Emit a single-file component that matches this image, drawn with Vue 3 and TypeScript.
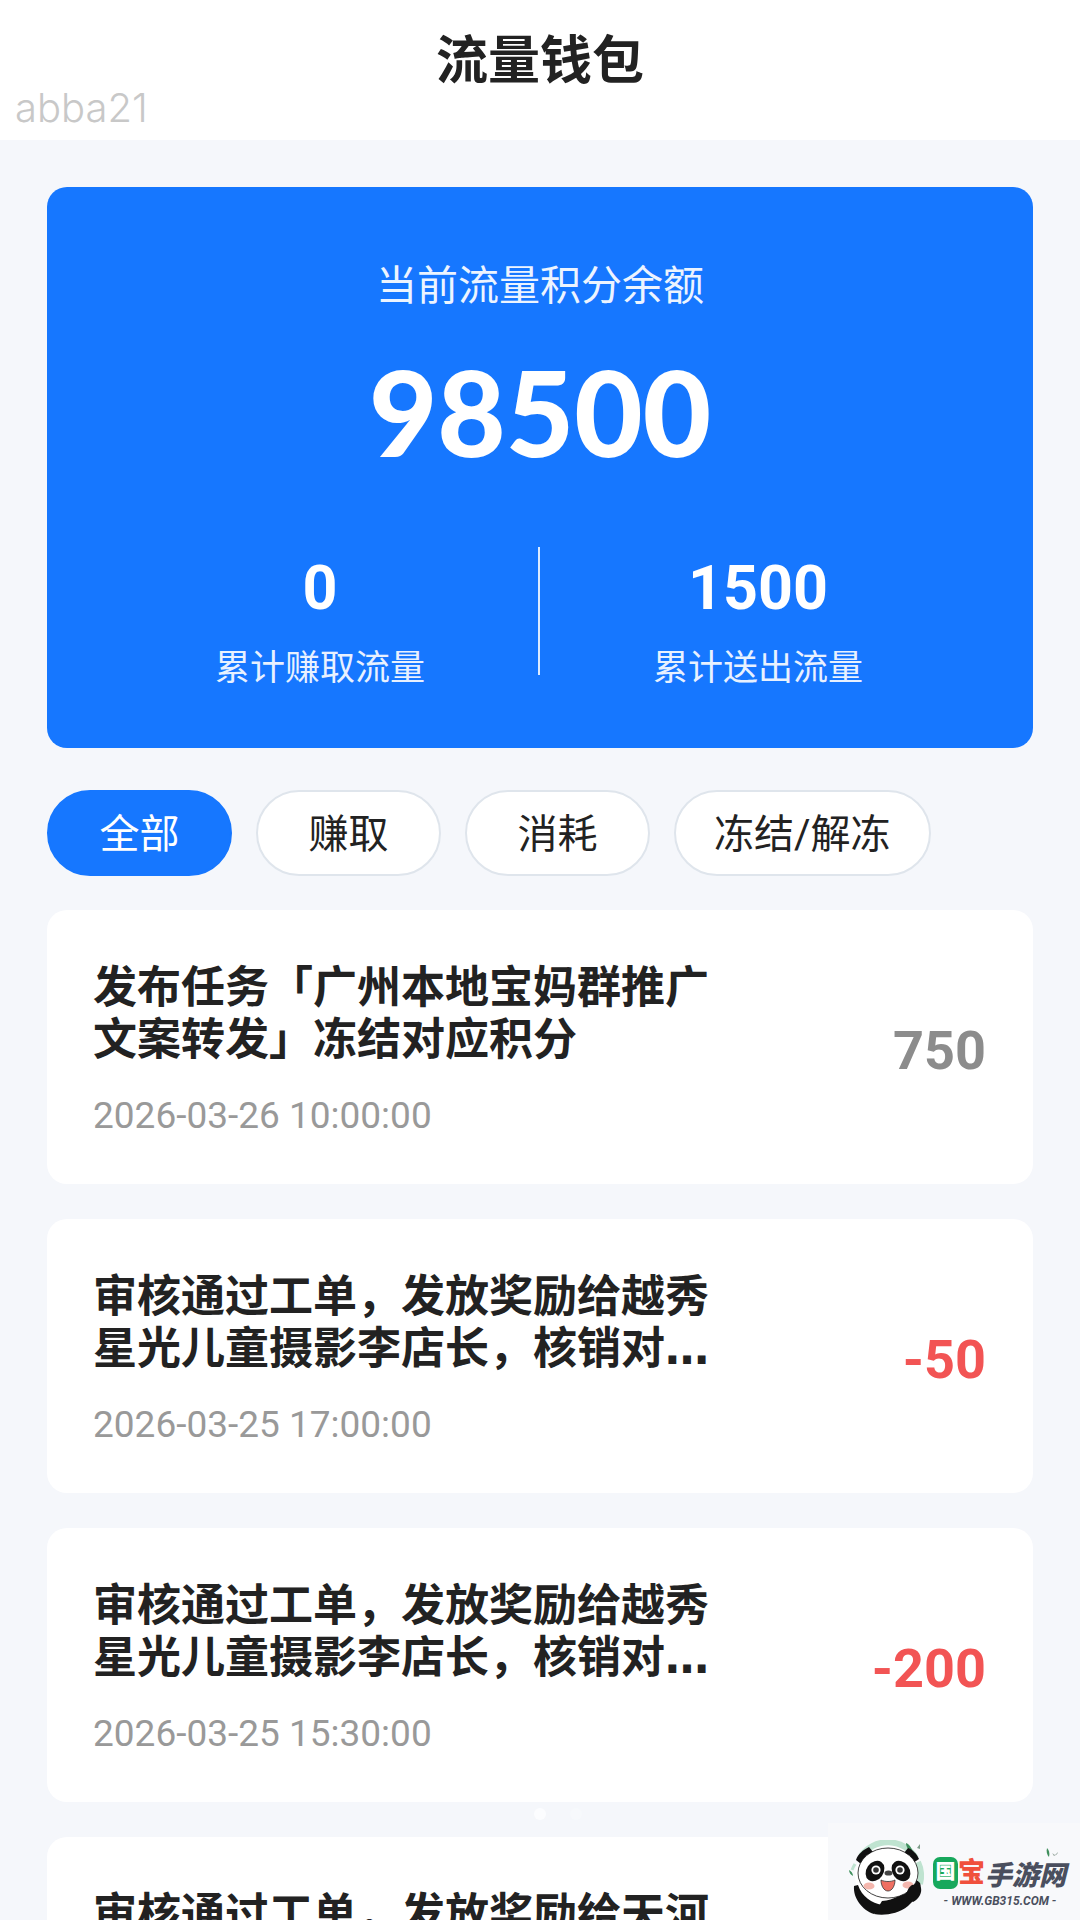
<template>
  <div class="page">
    <header class="top-bar">
      <h1 class="title">流量钱包</h1>
    </header>
    <span class="user-mark">abba21</span>

    <main class="content">
      <section class="balance-card">
        <div class="balance-label">当前流量积分余额</div>
        <div class="balance-value">98500</div>
        <div class="stats">
          <div class="stat">
            <div class="stat-value">0</div>
            <div class="stat-label">累计赚取流量</div>
          </div>
          <div class="stat-divider"></div>
          <div class="stat">
            <div class="stat-value">1500</div>
            <div class="stat-label">累计送出流量</div>
          </div>
        </div>
      </section>

      <nav class="tabs">
        <button
          v-for="(tab, i) in tabs"
          :key="tab"
          class="tab"
          :class="{ active: i === 0 }"
        >
          {{ tab }}
        </button>
      </nav>

      <ul class="records">
        <li v-for="item in records" :key="item.time" class="record">
          <div class="record-main">
            <div class="record-title">{{ item.title }}</div>
            <div class="record-time">{{ item.time }}</div>
          </div>
          <div class="record-amount" :class="item.kind">{{ item.amount }}</div>
        </li>
      </ul>
    </main>

    <div class="scroll-dots"><i class="on"></i><i></i></div>

    <div class="site-mark">
      <svg class="panda" viewBox="0 0 80 76" xmlns="http://www.w3.org/2000/svg">
        <circle cx="40" cy="36" r="33" fill="#fff" />
        <path d="M13 16A33 33 0 0 1 68 18" fill="none" stroke="#bfe3d0" stroke-width="6" />
        <path d="M70 22A33 33 0 0 1 72 44" fill="none" stroke="#bfe3d0" stroke-width="6" />
        <path d="M4 30A36 36 0 0 1 7 24" fill="none" stroke="#bfe3d0" stroke-width="3" />
        <path d="M58 3c3 1 6 5 7 10-4-2-7-6-7-10z" fill="#3f8f5c" />
        <path d="M69 8l3-4 0 5z" fill="#7d9c88" />
        <path d="M1 30c2 1 4 3 4 6-2-1-4-3-4-6z" fill="#3f8f5c" />
        <path d="M8 20c2-6 7-10 13-13l4 5c-6 2-10 7-12 12z" fill="#111" />
        <path d="M60 8c5 2 9 6 11 11l-6 4c-2-4-5-8-9-10z" fill="#111" />
        <path d="M6 46c-1 12 8 24 20 28l8-9c-10-2-20-8-24-20z" fill="#111" />
        <path d="M26 74c10 2 24 0 34-8l8-8c4-4 6-10 4-15-2-3-6-4-9-3l-3 8c-4 6-14 12-26 13z" fill="#111" />
        <ellipse cx="40" cy="33" rx="30" ry="25" fill="#fff" stroke="#111" stroke-width="0.8" />
        <ellipse cx="27" cy="31" rx="8.5" ry="11" fill="#111" transform="rotate(35 27 31)" />
        <ellipse cx="53" cy="31" rx="8.5" ry="11" fill="#111" transform="rotate(-35 53 31)" />
        <circle cx="28" cy="30" r="4.6" fill="#fff" />
        <circle cx="52" cy="30" r="4.6" fill="#fff" />
        <circle cx="28" cy="30" r="2.8" fill="#333" />
        <circle cx="52" cy="30" r="2.8" fill="#333" />
        <ellipse cx="21" cy="46" rx="5.5" ry="3.6" fill="#f4b6ad" />
        <ellipse cx="60" cy="45" rx="5.5" ry="3.6" fill="#f4b6ad" />
        <ellipse cx="40.5" cy="33" rx="4" ry="2.6" fill="#444" />
        <path d="M33 40c4 2 10 2 14 0 0 6-3 11-7 11s-7-5-7-11z" fill="#ef6f62" stroke="#333" stroke-width="0.8" />
        <path d="M58 56c1-6 3-9 6-11 4-1 8 0 9 3 1 5-2 11-8 14z" fill="#111" />
      </svg>
      <div class="site-text">
        <svg class="site-leaf" viewBox="0 0 14 12" xmlns="http://www.w3.org/2000/svg">
          <path d="M1 0c2 2 3 5 2 9-2-2-3-6-2-9z" fill="#3f8f5c" />
          <path d="M8 8c-1-1-1-2-2-3l3 2 3-3c0 2-2 3-4 4z" fill="#9aa8a0" />
        </svg>
        <div class="site-name">
          <span class="site-guo">国</span><span class="site-bao">宝</span><span class="site-rest">手游网</span>
        </div>
        <div class="site-url">- WWW.GB315.COM -</div>
      </div>
    </div>
  </div>
</template>

<script setup lang="ts">
interface WalletRecord {
  title: string;
  time: string;
  amount: string;
  kind: 'frozen' | 'minus';
}

const tabs = ['全部', '赚取', '消耗', '冻结/解冻'];

const records: WalletRecord[] = [
  {
    title: '发布任务「广州本地宝妈群推广文案转发」冻结对应积分',
    time: '2026-03-26 10:00:00',
    amount: '750',
    kind: 'frozen',
  },
  {
    title: '审核通过工单，发放奖励给越秀星光儿童摄影李店长，核销对…',
    time: '2026-03-25 17:00:00',
    amount: '-50',
    kind: 'minus',
  },
  {
    title: '审核通过工单，发放奖励给越秀星光儿童摄影李店长，核销对…',
    time: '2026-03-25 15:30:00',
    amount: '-200',
    kind: 'minus',
  },
  {
    title: '审核通过工单，发放奖励给天河星光儿童摄影李店长，核销对…',
    time: '2026-03-25 11:00:00',
    amount: '-100',
    kind: 'minus',
  },
];
</script>

<style>
html,
body {
  margin: 0;
  background: #f5f7fb;
}
</style>

<style scoped>
.page {
  position: relative;
  width: 1080px;
  height: 1920px;
  overflow: hidden;
  background: #f5f7fb;
  font-family: Roboto, "Noto Sans CJK SC", sans-serif;
  color: #222;
}

.top-bar {
  height: 140px;
  box-sizing: border-box;
  padding-top: 26px;
  background: #fff;
}

.title {
  margin: 0;
  font-size: 52px;
  line-height: 72px;
  font-weight: 700;
  text-align: center;
  color: #222;
}

.user-mark {
  position: absolute;
  left: 15px;
  top: 84px;
  font-family: Inter, sans-serif;
  font-size: 40px;
  line-height: 48px;
  font-weight: 300;
  color: #c8c8c8;
}

.content {
  padding: 47px 47px 0;
}

.balance-card {
  box-sizing: border-box;
  height: 561px;
  padding-top: 71px;
  border-radius: 20px;
  background: #1677ff;
  color: #fff;
  text-align: center;
}

.balance-label {
  font-size: 41px;
  line-height: 56px;
  opacity: 0.92;
}

.balance-value {
  margin-top: 28px;
  font-family: Lato, Roboto, sans-serif;
  font-size: 118px;
  line-height: 140px;
  font-weight: 900;
}

.stats {
  display: flex;
  margin-top: 71px;
  padding: 0 57px 0 55px;
}

.stat {
  flex: 1;
}

.stat-value {
  font-size: 61px;
  line-height: 70px;
  font-weight: 700;
}

.stat-label {
  margin-top: 21px;
  font-size: 35px;
  line-height: 50px;
  opacity: 0.9;
}

.stat-divider {
  width: 2px;
  height: 128px;
  margin-top: -6px;
  background: rgba(255, 255, 255, 0.85);
}

.tabs {
  display: flex;
  gap: 24px;
  margin-top: 42px;
}

.tab {
  box-sizing: border-box;
  height: 86px;
  min-width: 185px;
  padding: 0 38px 4px;
  border: 2px solid #dfe5ec;
  border-radius: 43px;
  background: #fff;
  font-family: inherit;
  font-size: 40px;
  color: #222;
}

.tab.active {
  border-color: #1677ff;
  background: #1677ff;
  color: #fff;
}

.records {
  display: flex;
  flex-direction: column;
  gap: 35px;
  margin: 34px 0 0;
  padding: 0;
  list-style: none;
}

.record {
  display: flex;
  align-items: center;
  justify-content: space-between;
  box-sizing: border-box;
  height: 274px;
  padding: 8px 47px 0 46px;
  border-radius: 20px;
  background: #fff;
}

.record-main {
  width: 616px;
}

.record-title {
  /* DejaVu first only for the wide three-dot ellipsis */
  font-family: "DejaVu Sans", "Noto Sans CJK SC", sans-serif;
  font-size: 44px;
  line-height: 52px;
  font-weight: 700;
  color: #222;
}

.record-time {
  margin-top: 26px;
  font-size: 37px;
  line-height: 48px;
  color: #999;
}

.record-amount {
  font-size: 54px;
  line-height: 64px;
  font-weight: 700;
}

.record-amount.frozen {
  color: #8c8c8c;
}

.record-amount.minus {
  color: #f25454;
}

.scroll-dots {
  position: absolute;
  left: 534px;
  top: 1808px;
  display: flex;
  gap: 24px;
}

.scroll-dots i {
  width: 12px;
  height: 12px;
  border-radius: 50%;
  background: #f7f9fc;
}

.scroll-dots i.on {
  background: #fcfdff;
}

.site-mark {
  position: absolute;
  right: 0;
  bottom: 0;
  display: flex;
  gap: 5px;
  width: 252px;
  height: 97px;
  box-sizing: border-box;
  padding: 17px 0 0 20px;
  background: #f8f9fb;
}

.panda {
  width: 80px;
  height: 76px;
  flex: none;
}

.site-text {
  position: relative;
  margin-top: 17px;
}

.site-leaf {
  position: absolute;
  left: 113px;
  top: -9px;
  width: 14px;
  height: 12px;
}

.site-name {
  display: flex;
  align-items: center;
  height: 32px;
  font-weight: 900;
  white-space: nowrap;
}

.site-guo {
  width: 25px;
  height: 32px;
  border-radius: 7px;
  background: #17a85c;
  font-size: 20px;
  line-height: 31px;
  text-align: center;
  color: #fff;
}

.site-bao {
  width: 27px;
  font-size: 27px;
  line-height: 32px;
  text-align: center;
  color: #f0503c;
}

.site-rest {
  margin-top: 5px;
  font-size: 27px;
  line-height: 30px;
  font-style: italic;
  color: #4a4f5e;
}

.site-url {
  margin-top: 5px;
  width: 134px;
  font-size: 12px;
  line-height: 14px;
  font-weight: 700;
  font-style: italic;
  color: #4a4f5e;
  text-align: center;
  white-space: nowrap;
}
</style>
